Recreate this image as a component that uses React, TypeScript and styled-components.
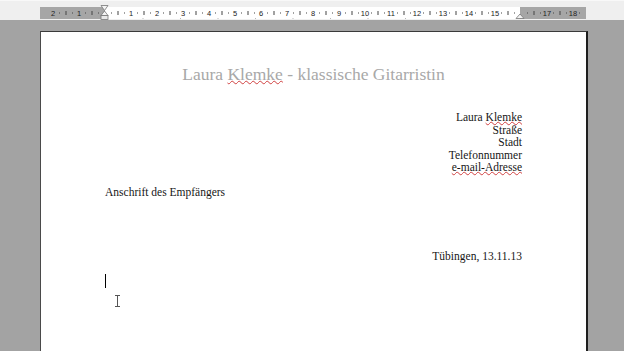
import { createGlobalStyle } from "styled-components";
import styled from "styled-components";

const GlobalStyle = createGlobalStyle`
    html, body {
        margin: 0;
        padding: 0;
        width: 624px;
        height: 351px;
        overflow: hidden;
        background: #a3a3a3;
        font-family: "Liberation Serif", "Times New Roman", "DejaVu Serif", serif;
    }
`;

const Window = styled.div`
    display: flex;
    flex-direction: column;
    width: 624px;
    height: 351px;
    overflow: hidden;
`;

const RulerBar = styled.div`
    height: 20px;
    flex: none;
    background: #efefef;
    border-top: 1px solid #f8f8f8;
    box-sizing: border-box;
`;

const Workspace = styled.div`
    position: relative;
    flex: 1;
    background: #a3a3a3;
    padding: 11px 0 0 40px;
`;

const Page = styled.div`
    width: 548px;
    height: 340px;
    background: #ffffff;
    border-top: 1px solid #3a3a3a;
    border-left: 1px solid #4a4a4a;
    border-right: 2px solid #1e1e1e;
    padding: 0 64px 0 64px;
    box-sizing: border-box;
    display: flex;
    flex-direction: column;
    color: #161616;
    font-family: "Liberation Serif", "Times New Roman", "DejaVu Serif", serif;
`;

const Title = styled.div`
    margin-top: 31px;
    text-align: center;
    font-size: 17.5px;
    line-height: 22px;
    color: #a8a8a8;
`;

const Spell = styled.span`
    text-decoration: underline wavy #d04040;
    text-decoration-thickness: 1px;
    text-underline-offset: 0px;
`;

const Sender = styled.div`
    margin-top: 26px;
    display: flex;
    flex-direction: column;
    align-items: flex-end;
    font-size: 11.5px;
    line-height: 12.6px;
`;

const Recipient = styled.div`
    margin-top: 12px;
    font-size: 11.5px;
    line-height: 13px;
`;

const DateLine = styled.div`
    margin-top: 51px;
    text-align: right;
    font-size: 11.5px;
    line-height: 13px;
`;

const Caret = styled.div`
    margin-top: 11px;
    width: 1px;
    height: 14px;
    background: #000;
`;

const Pointer = styled.svg`
    position: absolute;
    left: 114px;
    top: 275px;
`;

const mm = 26;
const zero = 105;

function Ruler() {
    const marks: JSX.Element[] = [];
    for (let n = -2; n <= 18; n++) {
        const x = zero + n * mm;
        if (n !== 0 && n !== 16 && x > 42 && x < 585) {
            marks.push(
                <text key={"t" + n} x={x} y={14.5} fontSize="7.5" textAnchor="middle" fill="#222" fontFamily="Liberation Sans, sans-serif">
                    {Math.abs(n)}
                </text>
            );
        }
        [0.25, 0.75].forEach((f) => {
            const dx = x + f * mm;
            if (dx > 42 && dx < 584) marks.push(<rect key={"d" + n + f} x={dx - 0.5} y={11.5} width={1} height={1} fill="#444" />);
        });
        const hx = x + 0.5 * mm;
        if (hx > 42 && hx < 584) marks.push(<rect key={"h" + n} x={hx - 0.5} y={10} width={1} height={4} fill="#444" />);
    }
    for (let n = 1; n <= 8; n++) {
        const tx = zero + n * 37.5;
        marks.push(<rect key={"tab" + n} x={tx} y={17} width={1} height={1} fill="#b8b8b8" />);
    }
    return (
        <svg width="624" height="19" viewBox="0 0 624 19">
            <rect x={40} y={6} width={546} height={12} fill="#a6a6a6" />
            <rect x={105} y={6} width={415} height={12} fill="#ffffff" />
            {marks}
            <path d="M101 4.5 L108 4.5 L104.5 9.5 Z" fill="#f4f4f4" stroke="#777" strokeWidth="0.8" />
            <path d="M104.5 10 L108 14.5 L101 14.5 Z" fill="#f4f4f4" stroke="#777" strokeWidth="0.8" />
            <rect x={101} y={14.5} width={7} height={4} fill="#e8e8e8" stroke="#777" strokeWidth="0.8" />
            <path d="M520 13 L524 17.5 L516 17.5 Z" fill="#f4f4f4" stroke="#777" strokeWidth="0.8" />
        </svg>
    );
}

export default function App() {
    return (
        <Window>
            <GlobalStyle />
            <RulerBar>
                <Ruler />
            </RulerBar>
            <Workspace>
                <Page>
                    <Title>
                        Laura <Spell>Klemke</Spell> - klassische Gitarristin
                    </Title>
                    <Sender>
                        <span>
                            Laura <Spell>Klemke</Spell>
                        </span>
                        <span>Straße</span>
                        <span>Stadt</span>
                        <span>Telefonnummer</span>
                        <Spell>e-mail-Adresse</Spell>
                    </Sender>
                    <Recipient>Anschrift des Empfängers</Recipient>
                    <DateLine>Tübingen, 13.11.13</DateLine>
                    <Caret />
                </Page>
                <Pointer width="7" height="12" viewBox="0 0 7 12">
                    <path d="M1 0.5 H6 M3.5 0.5 V11.5 M1 11.5 H6" stroke="#555" strokeWidth="1" fill="none" />
                </Pointer>
            </Workspace>
        </Window>
    );
}
